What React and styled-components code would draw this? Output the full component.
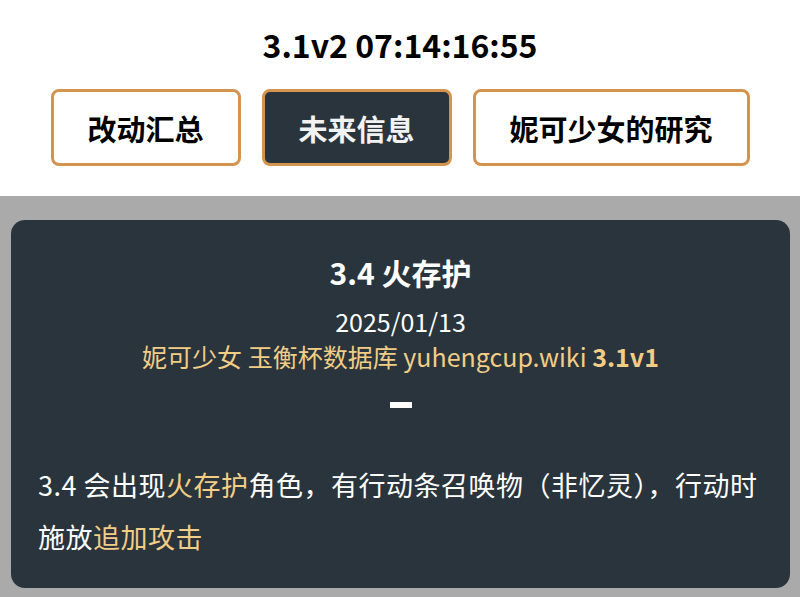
import React from "react";
import styled, { createGlobalStyle } from "styled-components";

const Global = createGlobalStyle`
  html, body { margin: 0; padding: 0; background: #ffffff; }
  body { font-family: "Noto Sans CJK SC", "Noto Sans", sans-serif; }
  * { box-sizing: border-box; }
`;

const Header = styled.header`
  background: #ffffff;
  padding: 25px 0 30px;
  display: flex;
  flex-direction: column;
  align-items: center;
`;

const Clock = styled.h1`
  margin: 0;
  font-size: 32px;
  line-height: 38px;
  font-weight: 700;
  color: #000000;
`;

const Nav = styled.nav`
  margin-top: 26px;
  display: flex;
  gap: 21px;
  justify-content: center;
`;

const NavButton = styled.button`
  width: ${(p) => p.$w}px;
  height: 77px;
  border: 3px solid #d3944f;
  border-radius: 8px;
  background: ${(p) => (p.$active ? "#29343c" : "#ffffff")};
  color: ${(p) => (p.$active ? "#f2f2f2" : "#000000")};
  font-family: inherit;
  font-size: 29px;
  font-weight: 700;
  cursor: pointer;
  padding: 0;
`;

const Main = styled.main`
  background: #aaaaaa;
  padding: 24px 10px 9px 11px;
`;

const Card = styled.article`
  background: #29343c;
  border-radius: 14px;
  padding: 33px 27px 25px;
  color: #ffffff;
  display: flex;
  flex-direction: column;
`;

const Title = styled.h2`
  margin: 0;
  text-align: center;
  font-size: 30px;
  line-height: 38px;
  font-weight: 700;
`;

const DateLine = styled.div`
  margin-top: 13px;
  text-align: center;
  font-size: 25px;
  line-height: 34px;
`;

const Source = styled.div`
  text-align: center;
  font-size: 25px;
  line-height: 36px;
  color: #f2cd86;
`;

const Bold = styled.b`
  font-weight: 700;
`;

const Dash = styled.div`
  margin: 28px auto 0;
  width: 22px;
  height: 6px;
  background: #ffffff;
`;

const Body = styled.p`
  margin: 51px 0 0;
  font-size: 27px;
  line-height: 52px;
  letter-spacing: 0.5px;
`;

const Gold = styled.span`
  color: #f2cd86;
`;

export default function App() {
  return (
    <>
      <Global />
      <Header>
        <Clock>3.1v2 07:14:16:55</Clock>
        <Nav>
          <NavButton $w={190}>改动汇总</NavButton>
          <NavButton $w={190} $active>未来信息</NavButton>
          <NavButton $w={277}>妮可少女的研究</NavButton>
        </Nav>
      </Header>
      <Main>
        <Card>
          <Title>3.4 火存护</Title>
          <DateLine>2025/01/13</DateLine>
          <Source>
            妮可少女 玉衡杯数据库 yuhengcup.wiki <Bold>3.1v1</Bold>
          </Source>
          <Dash />
          <Body>
            3.4 会出现<Gold>火存护</Gold>角色，有行动条召唤物（非忆灵），行动时施放<Gold>追加攻击</Gold>
          </Body>
        </Card>
      </Main>
    </>
  );
}
